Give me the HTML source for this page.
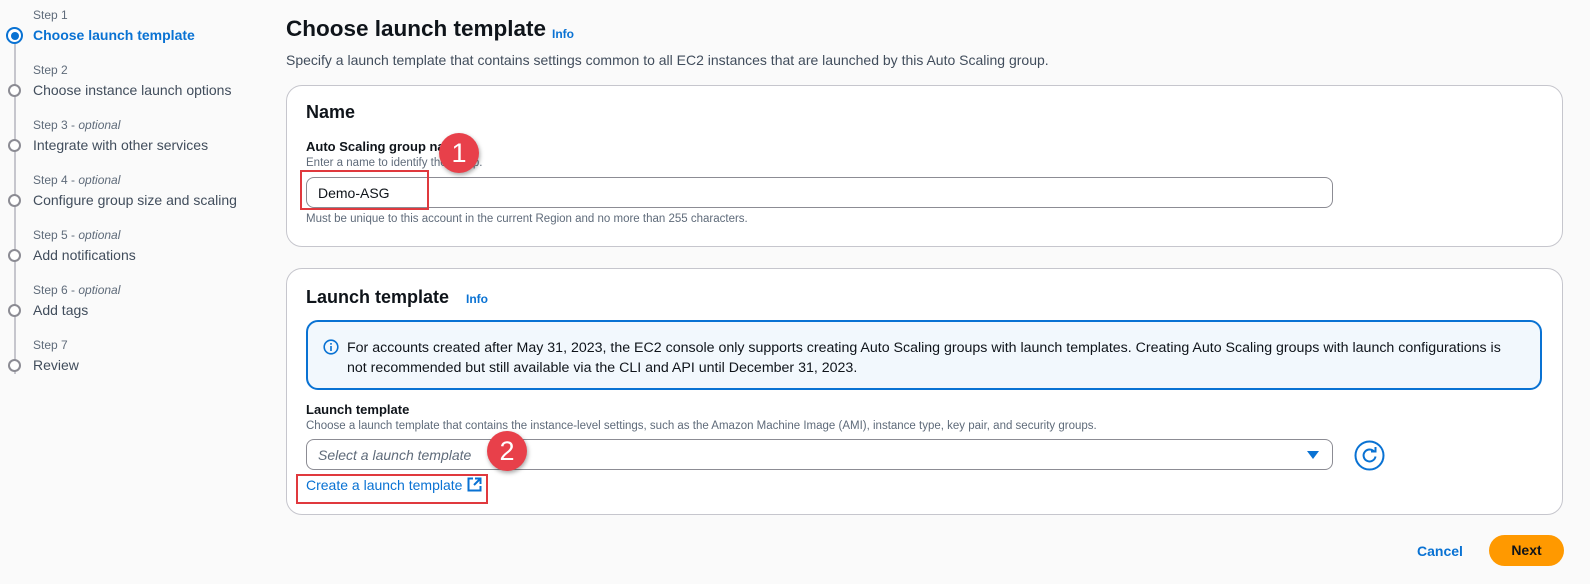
<!DOCTYPE html>
<html><head><meta charset="utf-8"><style>
*{margin:0;padding:0;box-sizing:border-box}
body{width:1590px;height:584px;background:#fafafa;font-family:"Liberation Sans",sans-serif;color:#0f141a;position:relative;overflow:hidden}
.a{position:absolute;white-space:nowrap}
.sl{font-size:12px;color:#5f6b7a}
.st{font-size:14px;color:#414d5c}
.dot{position:absolute;left:8px;width:13px;height:13px;border:2px solid #8c8c94;border-radius:50%;background:#fff}
.line{position:absolute;left:13.5px;width:2px;background:#c6c6cd}
.card{position:absolute;left:286px;width:1277px;background:#fff;border:1px solid #c6c6cd;border-radius:16px}
.red{position:absolute;border:2px solid #e0393e}
.num{position:absolute;width:40px;height:40px;border-radius:50%;background:#e8404a;color:#fff;font-size:27px;text-align:center;line-height:40px;box-shadow:1px 2px 4px rgba(0,0,0,.35)}
.info{color:#0972d3;font-size:12px;font-weight:bold}
</style></head><body>
<div class="line" style="top:44px;height:330px"></div>
<div class="a sl" style="left:33px;top:8px">Step 1</div>
<div class="a" style="left:33px;top:27px;font-size:14px;font-weight:bold;color:#0972d3">Choose launch template</div>
<div style="position:absolute;left:6px;top:27px;width:17px;height:17px;border:2px solid #0972d3;border-radius:50%;background:#fff"><div style="position:absolute;left:2.5px;top:2.5px;width:8px;height:8px;border-radius:50%;background:#0972d3"></div></div>
<div class="a sl" style="left:33px;top:63px">Step 2</div>
<div class="a st" style="left:33px;top:82px">Choose instance launch options</div><div class="dot" style="top:84px"></div>
<div class="a sl" style="left:33px;top:118px">Step 3 - <i>optional</i></div>
<div class="a st" style="left:33px;top:137px">Integrate with other services</div><div class="dot" style="top:139px"></div>
<div class="a sl" style="left:33px;top:173px">Step 4 - <i>optional</i></div>
<div class="a st" style="left:33px;top:192px">Configure group size and scaling</div><div class="dot" style="top:194px"></div>
<div class="a sl" style="left:33px;top:228px">Step 5 - <i>optional</i></div>
<div class="a st" style="left:33px;top:247px">Add notifications</div><div class="dot" style="top:249px"></div>
<div class="a sl" style="left:33px;top:283px">Step 6 - <i>optional</i></div>
<div class="a st" style="left:33px;top:302px">Add tags</div><div class="dot" style="top:304px"></div>
<div class="a sl" style="left:33px;top:338px">Step 7</div>
<div class="a st" style="left:33px;top:357px">Review</div><div class="dot" style="top:359px"></div>

<div class="a" style="left:286px;top:16px;font-size:22.5px;font-weight:bold">Choose launch template</div>
<div class="a info" style="left:552px;top:27px">Info</div>
<div class="a" style="left:286px;top:52px;font-size:14px;color:#414d5c">Specify a launch template that contains settings common to all EC2 instances that are launched by this Auto Scaling group.</div>

<div class="card" style="top:85px;height:162px"></div>
<div class="a" style="left:306px;top:102px;font-size:18px;font-weight:bold">Name</div>
<div class="a" style="left:306px;top:139px;font-size:13px;font-weight:bold">Auto Scaling group name</div>
<div class="a" style="left:306px;top:157px;font-size:11.5px;color:#5f6b7a">Enter a name to identify the group.</div>
<div style="position:absolute;left:306px;top:177px;width:1027px;height:31px;border:1px solid #8c8c94;border-radius:8px;background:#fff"></div>
<div class="a" style="left:318px;top:185px;font-size:14px">Demo-ASG</div>
<div class="a" style="left:306px;top:213px;font-size:11.5px;color:#5f6b7a">Must be unique to this account in the current Region and no more than 255 characters.</div>
<div class="red" style="left:300px;top:170px;width:129px;height:40px"></div>
<div class="num" style="left:439px;top:133px">1</div>

<div class="card" style="top:268px;height:247px"></div>
<div class="a" style="left:306px;top:287px;font-size:18px;font-weight:bold">Launch template</div>
<div class="a info" style="left:466px;top:292px">Info</div>
<div style="position:absolute;left:306px;top:320px;width:1236px;height:70px;border:2px solid #0972d3;border-radius:12px;background:#f2f8fd"></div>
<svg class="a" style="left:323px;top:339px" width="16" height="16" viewBox="0 0 16 16"><circle cx="8" cy="8" r="6.8" fill="none" stroke="#0972d3" stroke-width="1.6"/><rect x="7.2" y="7" width="1.6" height="5" fill="#0972d3"/><rect x="7.2" y="4" width="1.6" height="1.7" fill="#0972d3"/></svg>
<div class="a" style="left:347px;top:338px;font-size:14.2px;line-height:20px">For accounts created after May 31, 2023, the EC2 console only supports creating Auto Scaling groups with launch templates. Creating Auto Scaling groups with launch configurations is<br>not recommended but still available via the CLI and API until December 31, 2023.</div>
<div class="a" style="left:306px;top:402px;font-size:13px;font-weight:bold">Launch template</div>
<div class="a" style="left:306px;top:420px;font-size:11.5px;color:#5f6b7a">Choose a launch template that contains the instance-level settings, such as the Amazon Machine Image (AMI), instance type, key pair, and security groups.</div>
<div style="position:absolute;left:306px;top:439px;width:1027px;height:31px;border:1px solid #8c8c94;border-radius:8px;background:#fff"></div>
<div class="a" style="left:318px;top:447px;font-size:14px;font-style:italic;color:#5f6b7a">Select a launch template</div>
<svg class="a" style="left:1307px;top:450px" width="12" height="10"><path d="M0 1H12L6 9Z" fill="#0972d3"/></svg>
<svg class="a" style="left:1354px;top:440px" width="31" height="31" viewBox="0 0 31 31"><circle cx="15.5" cy="15.5" r="14" fill="none" stroke="#0972d3" stroke-width="2"/><path d="M20.5 12A6 6 0 1 0 21.5 16.5" fill="none" stroke="#0972d3" stroke-width="2"/><path d="M17 11.5H21.5V7" fill="none" stroke="#0972d3" stroke-width="2"/></svg>
<div class="a" style="left:306px;top:477px;font-size:14px;color:#0972d3">Create a launch template</div>
<svg class="a" style="left:467px;top:477px" width="15" height="15" viewBox="0 0 15 15"><path d="M6 1.5H1.5V13.5H13.5V9" fill="none" stroke="#0972d3" stroke-width="2"/><path d="M8 1.5H13.5V7M13.5 1.5L7 8" fill="none" stroke="#0972d3" stroke-width="2"/></svg>
<div class="red" style="left:296px;top:474px;width:192px;height:30px"></div>
<div class="num" style="left:487px;top:431px">2</div>

<div class="a" style="left:1417px;top:543px;font-size:14px;font-weight:bold;color:#0972d3">Cancel</div>
<div style="position:absolute;left:1489px;top:535px;width:75px;height:31px;border-radius:16px;background:#ff9900;font-size:14px;font-weight:bold;text-align:center;line-height:31px">Next</div>
</body></html>
